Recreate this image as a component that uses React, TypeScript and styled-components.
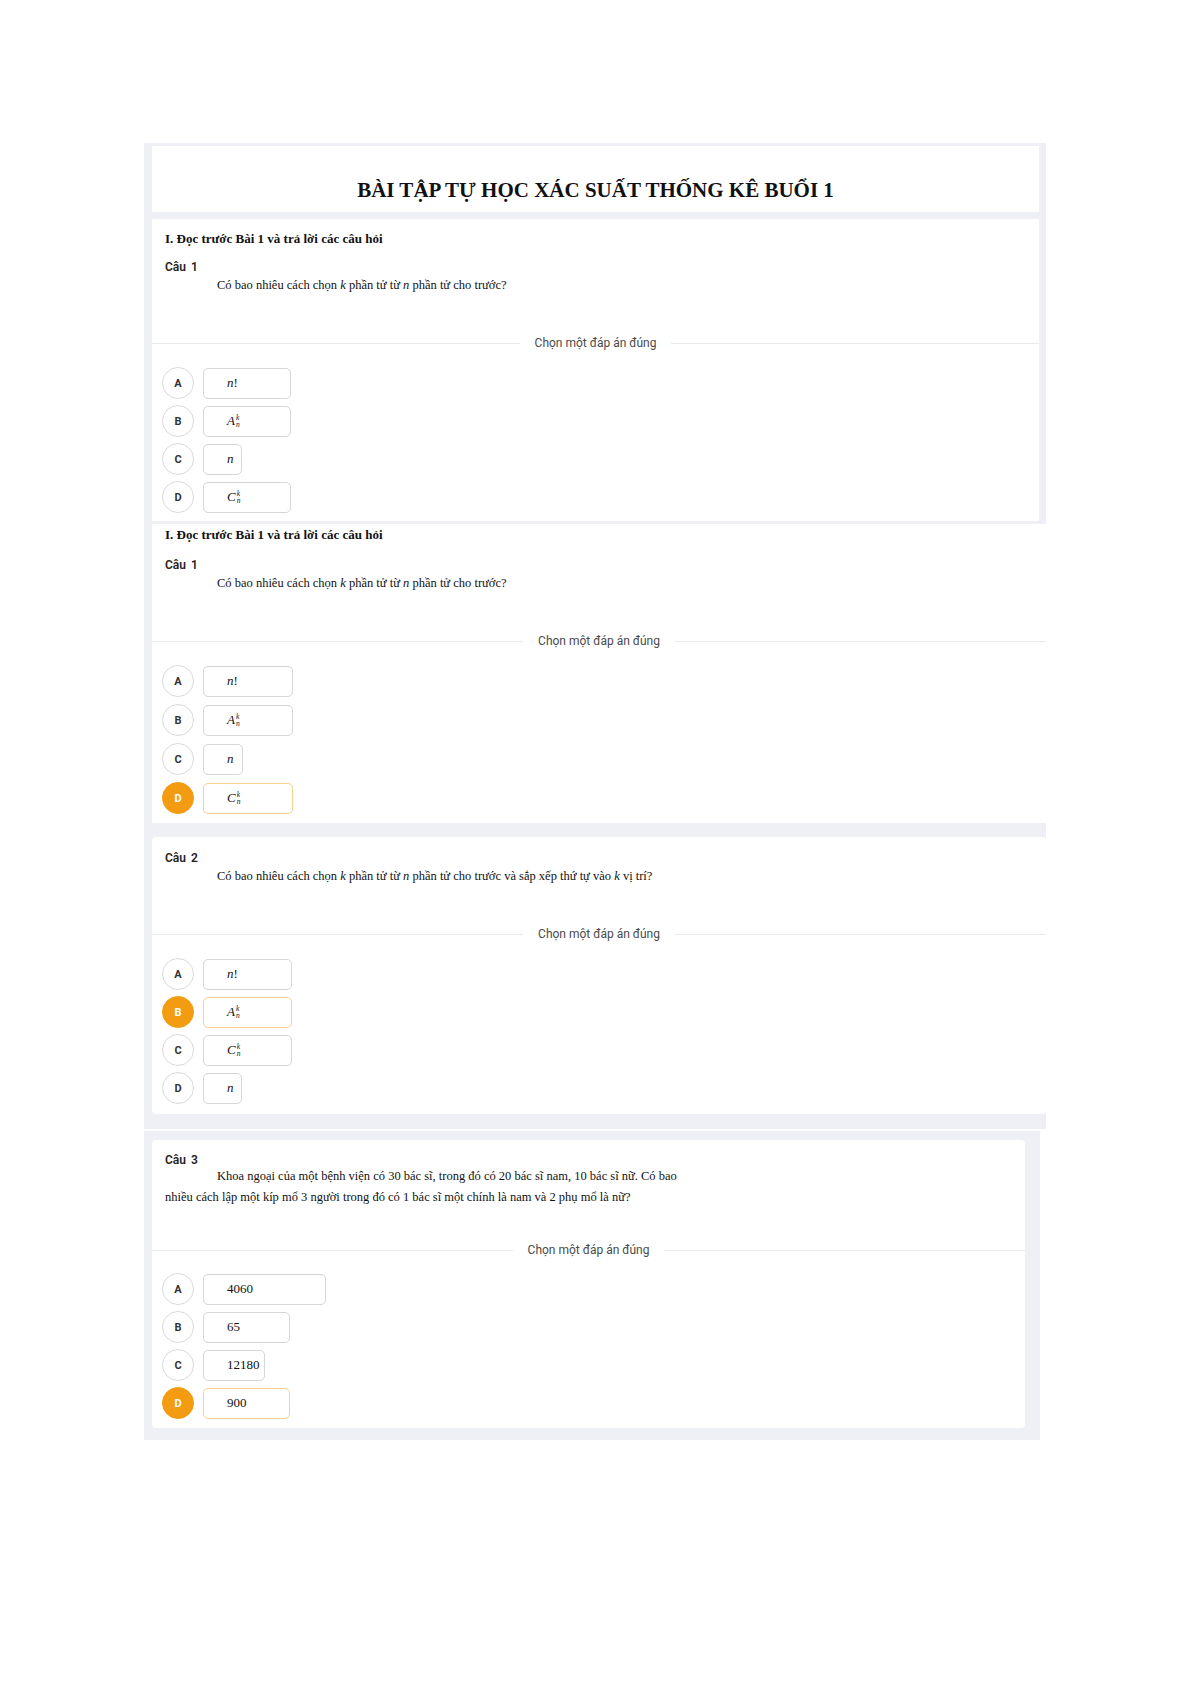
import * as React from 'react';
import styled, { createGlobalStyle } from 'styled-components';

const GlobalStyle = createGlobalStyle`
    body {
        margin: 0;
        background: #ffffff;
        font-family: 'Liberation Serif', 'Times New Roman', serif;
        color: #111111;
    }
`;

const ORANGE = '#f39c12';
const GREY_BG = '#eef0f5';

const Page = styled.div`
    box-sizing: border-box;
    width: 1192px;
    min-height: 1685px;
    padding: 143px 0 0 144px;
`;

const Shot = styled.div<{ $width: number; $pad: string; $mt?: number }>`
    box-sizing: border-box;
    width: ${(p) => p.$width}px;
    padding: ${(p) => p.$pad};
    margin-top: ${(p) => p.$mt || 0}px;
    background: ${GREY_BG};
    display: flex;
    flex-direction: column;
    gap: 7px;
`;

const TitleBox = styled.div`
    background: #ffffff;
    height: 66px;
    box-sizing: border-box;
    padding-top: 32px;
    text-align: center;
`;

const Title = styled.h1`
    margin: 0;
    font: 700 21px/24px 'Liberation Serif', 'Times New Roman', serif;
    color: #111111;
`;

const Card = styled.div<{ $pt: number; $pb: number; $round?: boolean }>`
    background: #ffffff;
    padding: ${(p) => p.$pt}px 0 ${(p) => p.$pb}px;
    border-radius: ${(p) => (p.$round ? '4px' : '0')};
`;

const SectionHeading = styled.div<{ $mb: number }>`
    padding-left: 13px;
    margin-bottom: ${(p) => p.$mb}px;
    font: 700 13px/16px 'Liberation Serif', 'Times New Roman', serif;
`;

const QuestionLabel = styled.div`
    padding-left: 13px;
    font: 600 12px/16px Roboto, 'Noto Sans', sans-serif;
    color: #222222;
    word-spacing: 2px;
`;

const QuestionText = styled.p<{ $mt: number; $mb: number; $lh: number }>`
    margin: ${(p) => p.$mt}px 0 ${(p) => p.$mb}px;
    padding: 0 13px;
    text-indent: 52px;
    font-size: 12.5px;
    line-height: ${(p) => p.$lh}px;
`;

const Divider = styled.div`
    display: flex;
    align-items: center;
    gap: 15px;
    height: 16px;
    font: 400 12px/16px Roboto, 'Noto Sans', sans-serif;
    color: #4a4a4a;

    &::before,
    &::after {
        content: '';
        flex: 1;
        height: 1px;
        background: #e9ebef;
    }
`;

const OptionList = styled.div<{ $gap: number; $pt: number }>`
    display: flex;
    flex-direction: column;
    gap: ${(p) => p.$gap}px;
    padding: ${(p) => p.$pt}px 0 0 10px;
`;

const OptionRow = styled.div`
    display: flex;
    align-items: center;
    gap: 9px;
`;

const Bubble = styled.div<{ $on?: boolean }>`
    box-sizing: border-box;
    width: 32px;
    height: 32px;
    border-radius: 50%;
    border: 1px solid ${(p) => (p.$on ? ORANGE : '#dadada')};
    background: ${(p) => (p.$on ? ORANGE : '#ffffff')};
    color: ${(p) => (p.$on ? '#ffffff' : '#333333')};
    display: flex;
    align-items: center;
    justify-content: center;
    font: 700 11px Roboto, 'Noto Sans', sans-serif;
`;

const AnswerBox = styled.div<{ $on?: boolean }>`
    box-sizing: border-box;
    height: 31px;
    padding-left: 23px;
    border: 1px solid ${(p) => (p.$on ? '#f5d28c' : '#d4d6da')};
    border-radius: 5px;
    display: flex;
    align-items: center;
    font-size: 13px;
    white-space: nowrap;
`;

const MathVar = styled.span`
    font-style: italic;
`;

const Scripts = styled.span`
    display: inline-flex;
    flex-direction: column;
    margin-left: 1px;
    font-size: 7.5px;
    line-height: 7px;
    font-style: italic;
    vertical-align: 5px;
`;

function Combo({ base }: { base: string }): JSX.Element {
    return (
        <span>
            <MathVar>{base}</MathVar>
            <Scripts>
                <span>k</span>
                <span>n</span>
            </Scripts>
        </span>
    );
}

const FACT = (
    <span>
        <MathVar>n</MathVar>!
    </span>
);
const ARR = <Combo base="A" />;
const COMB = <Combo base="C" />;
const N = <MathVar>n</MathVar>;

interface Option {
    letter: string;
    content: React.ReactNode;
    width: number;
    selected?: boolean;
}

interface QuestionProps {
    label: string;
    text: React.ReactNode;
    options: Option[];
    textMt?: number;
    textMb?: number;
    lineHeight?: number;
    gap?: number;
    optionsTop?: number;
}

function Question(props: QuestionProps): JSX.Element {
    return (
        <>
            <QuestionLabel>{props.label}</QuestionLabel>
            <QuestionText $mt={props.textMt || 0} $mb={props.textMb ?? 40} $lh={props.lineHeight || 20}>
                {props.text}
            </QuestionText>
            <Divider>Chọn một đáp án đúng</Divider>
            <OptionList $gap={props.gap ?? 6} $pt={props.optionsTop ?? 16}>
                {props.options.map((opt) => (
                    <OptionRow key={opt.letter}>
                        <Bubble $on={opt.selected}>{opt.letter}</Bubble>
                        <AnswerBox $on={opt.selected} style={{ width: opt.width }}>
                            {opt.content}
                        </AnswerBox>
                    </OptionRow>
                ))}
            </OptionList>
        </>
    );
}

const Q1_TEXT = (
    <>
        Có bao nhiêu cách chọn <MathVar>k</MathVar> phần tử từ <MathVar>n</MathVar> phần tử cho trước?
    </>
);

const Q2_TEXT = (
    <>
        Có bao nhiêu cách chọn <MathVar>k</MathVar> phần tử từ <MathVar>n</MathVar> phần tử cho trước và sắp xếp thứ tự
        vào <MathVar>k</MathVar> vị trí?
    </>
);

const Q3_TEXT = (
    <>
        Khoa ngoại của một bệnh viện có 30 bác sĩ, trong đó có 20 bác sĩ nam, 10 bác sĩ nữ. Có bao
        <br />
        nhiều cách lập một kíp mổ 3 người trong đó có 1 bác sĩ một chính là nam và 2 phụ mổ là nữ?
    </>
);

const HEADING = 'I. Đọc trước Bài 1 và trả lời các câu hỏi';

export default function App(): JSX.Element {
    return (
        <Page>
            <GlobalStyle />

            <Shot $width={902} $pad="3px 7px 3px 8px">
                <TitleBox>
                    <Title>BÀI TẬP TỰ HỌC XÁC SUẤT THỐNG KÊ BUỔI 1</Title>
                </TitleBox>
                <Card $pt={12} $pb={8}>
                    <SectionHeading $mb={12}>{HEADING}</SectionHeading>
                    <Question
                        label="Câu 1"
                        text={Q1_TEXT}
                        options={[
                            { letter: 'A', content: FACT, width: 88 },
                            { letter: 'B', content: ARR, width: 88 },
                            { letter: 'C', content: N, width: 39 },
                            { letter: 'D', content: COMB, width: 88 }
                        ]}
                    />
                </Card>
            </Shot>

            <Shot $width={902} $pad="0 0 0 8px">
                <Card $pt={3} $pb={9}>
                    <SectionHeading $mb={14}>{HEADING}</SectionHeading>
                    <Question
                        label="Câu 1"
                        text={Q1_TEXT}
                        gap={7}
                        options={[
                            { letter: 'A', content: FACT, width: 90 },
                            { letter: 'B', content: ARR, width: 90 },
                            { letter: 'C', content: N, width: 40 },
                            { letter: 'D', content: COMB, width: 90, selected: true }
                        ]}
                    />
                </Card>
            </Shot>

            <Shot $width={902} $pad="14px 0 15px 8px">
                <Card $pt={13} $pb={10} $round>
                    <Question
                        label="Câu 2"
                        text={Q2_TEXT}
                        options={[
                            { letter: 'A', content: FACT, width: 89 },
                            { letter: 'B', content: ARR, width: 89, selected: true },
                            { letter: 'C', content: COMB, width: 89 },
                            { letter: 'D', content: N, width: 39 }
                        ]}
                    />
                </Card>
            </Shot>

            <Shot $width={896} $pad="9px 15px 12px 8px" $mt={2}>
                <Card $pt={12} $pb={9} $round>
                    <Question
                        label="Câu 3"
                        text={Q3_TEXT}
                        textMt={-2}
                        textMb={34}
                        lineHeight={21}
                        gap={6}
                        optionsTop={15}
                        options={[
                            { letter: 'A', content: '4060', width: 123 },
                            { letter: 'B', content: '65', width: 87 },
                            { letter: 'C', content: '12180', width: 62 },
                            { letter: 'D', content: '900', width: 87, selected: true }
                        ]}
                    />
                </Card>
            </Shot>
        </Page>
    );
}
